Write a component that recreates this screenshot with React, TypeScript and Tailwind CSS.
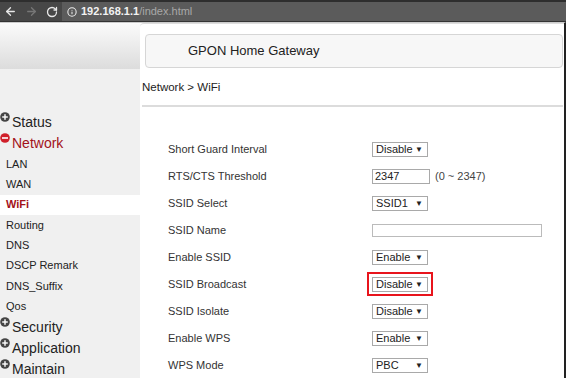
import { ArrowLeft, ArrowRight, RotateCw, Info } from "lucide-react";

const font = { fontFamily: '"Liberation Sans", Arial, sans-serif' };

const subItems = ["LAN", "WAN", "WiFi", "Routing", "DNS", "DSCP Remark", "DNS_Suffix", "Qos"];

function PlusIcon({ minus = false }: { minus?: boolean }) {
  return (
    <svg width="10" height="10" viewBox="0 0 10 10" className="shrink-0 self-start mt-[1px] mr-[2px]">
      <circle cx="5" cy="5" r="4.8" fill={minus ? "#d0202a" : "#444"} />
      {minus ? (
        <rect x="2" y="4.2" width="6" height="1.6" fill="#fff" />
      ) : (
        <>
          <rect x="2.2" y="4.3" width="5.6" height="1.4" fill="#fff" />
          <rect x="4.3" y="2.2" width="1.4" height="5.6" fill="#fff" />
        </>
      )}
    </svg>
  );
}

function MainItem({ label, open = false }: { label: string; open?: boolean }) {
  return (
    <div className="flex items-center h-[21px]">
      <PlusIcon minus={open} />
      <span className={`text-[14px] leading-none ${open ? "text-[#a3121a]" : "text-[#222]"}`}>{label}</span>
    </div>
  );
}

function Select({ value }: { value: string }) {
  return (
    <div className="w-[56px] h-[15px] border border-[#a9a9a9] bg-white flex items-center justify-between pl-[3px] pr-[4px] text-[11px] text-[#222]">
      <span className="leading-none">{value}</span>
      <span className="text-[8px] leading-none">▼</span>
    </div>
  );
}

const rows: { label: string; field: React.ReactNode }[] = [
  { label: "Short Guard Interval", field: <Select value="Disable" /> },
  {
    label: "RTS/CTS Threshold",
    field: (
      <div className="flex items-center gap-[5px]">
        <div className="w-[58px] h-[15px] border border-[#a9a9a9] bg-white pl-[2px] text-[11px] leading-[13px] text-[#222]">2347</div>
        <span className="text-[11px] text-[#444]">(0 ~ 2347)</span>
      </div>
    ),
  },
  { label: "SSID Select", field: <Select value="SSID1" /> },
  { label: "SSID Name", field: <div className="w-[170px] h-[13px] border border-[#bbb] bg-white" /> },
  { label: "Enable SSID", field: <Select value="Enable" /> },
  {
    label: "SSID Broadcast",
    field: (
      <div className="relative">
        <Select value="Disable" />
        <div className="absolute left-[-5px] top-[-5px] w-[66px] h-[24px] border-2 border-[#e8141c]" />
      </div>
    ),
  },
  { label: "SSID Isolate", field: <Select value="Disable" /> },
  { label: "Enable WPS", field: <Select value="Enable" /> },
  { label: "WPS Mode", field: <Select value="PBC" /> },
];

export default function App() {
  return (
    <div className="w-[566px] h-[378px] overflow-hidden bg-white flex flex-col" style={font}>
      {/* browser toolbar */}
      <div className="h-[25px] bg-[#474747] border-t-2 border-[#2e2e2e] border-b border-b-[#333] flex items-center">
        <div className="flex items-center gap-[8px] pl-[4px] w-[62px]">
          <ArrowLeft size={13} color="#e8e8e8" strokeWidth={2.4} />
          <ArrowRight size={13} color="#777" strokeWidth={2.4} />
          <RotateCw size={12} color="#e8e8e8" strokeWidth={2.6} />
        </div>
        <div className="flex-1 h-[19px] bg-[#5b5b5b] flex items-center gap-[4px] pl-[5px] text-[11px]">
          <Info size={10} color="#eee" strokeWidth={2.5} />
          <span>
            <span className="text-[#f2f2f2] font-bold">192.168.1.1</span>
            <span className="text-[#a8a8a8]">/index.html</span>
          </span>
        </div>
      </div>

      <div className="flex-1 flex border-r-2 border-b-2 border-[#222] border-t border-t-[#ccc]">
        {/* sidebar */}
        <div className="w-[140px] flex flex-col bg-[#f0f0f0]">
          <div className="h-[46px] bg-gradient-to-b from-[#fbfbfb] to-[#dcdcdc]" />
          <div className="h-[42px]" />
          <MainItem label="Status" />
          <MainItem label="Network" open />
          <div className="flex flex-col pt-[1px]">
            {subItems.map((s) => (
              <div
                key={s}
                className={`h-[20.3px] flex items-center pl-[6px] text-[11px] ${
                  s === "WiFi" ? "bg-white text-[#a3121a] font-bold" : "text-[#222]"
                }`}
              >
                {s}
              </div>
            ))}
          </div>
          <MainItem label="Security" />
          <MainItem label="Application" />
          <MainItem label="Maintain" />
        </div>

        {/* content */}
        <div className="flex-1 flex flex-col pl-[2px] pr-[1px] pt-[10px] border-t border-[#ddd] rounded-tl-[4px]">
          <div className="ml-[3px] h-[34px] border border-[#d6d6d6] rounded-[4px] bg-[#f7f7f7] flex items-center pl-[42px] text-[13px] text-[#222]">
            GPON Home Gateway
          </div>
          <div className="h-[37px] flex items-center pt-[2px] text-[11.5px] text-[#222]">Network &gt; WiFi</div>
          <div className="h-[2px] bg-[#dcdcdc]" />
          <div className="flex flex-col pt-[29px] pl-[26px]">
            {rows.map((r) => (
              <div key={r.label} className="h-[27px] flex items-center">
                <div className="w-[204px] text-[11px] text-[#333]">{r.label}</div>
                {r.field}
              </div>
            ))}
          </div>
        </div>
      </div>
    </div>
  );
}
